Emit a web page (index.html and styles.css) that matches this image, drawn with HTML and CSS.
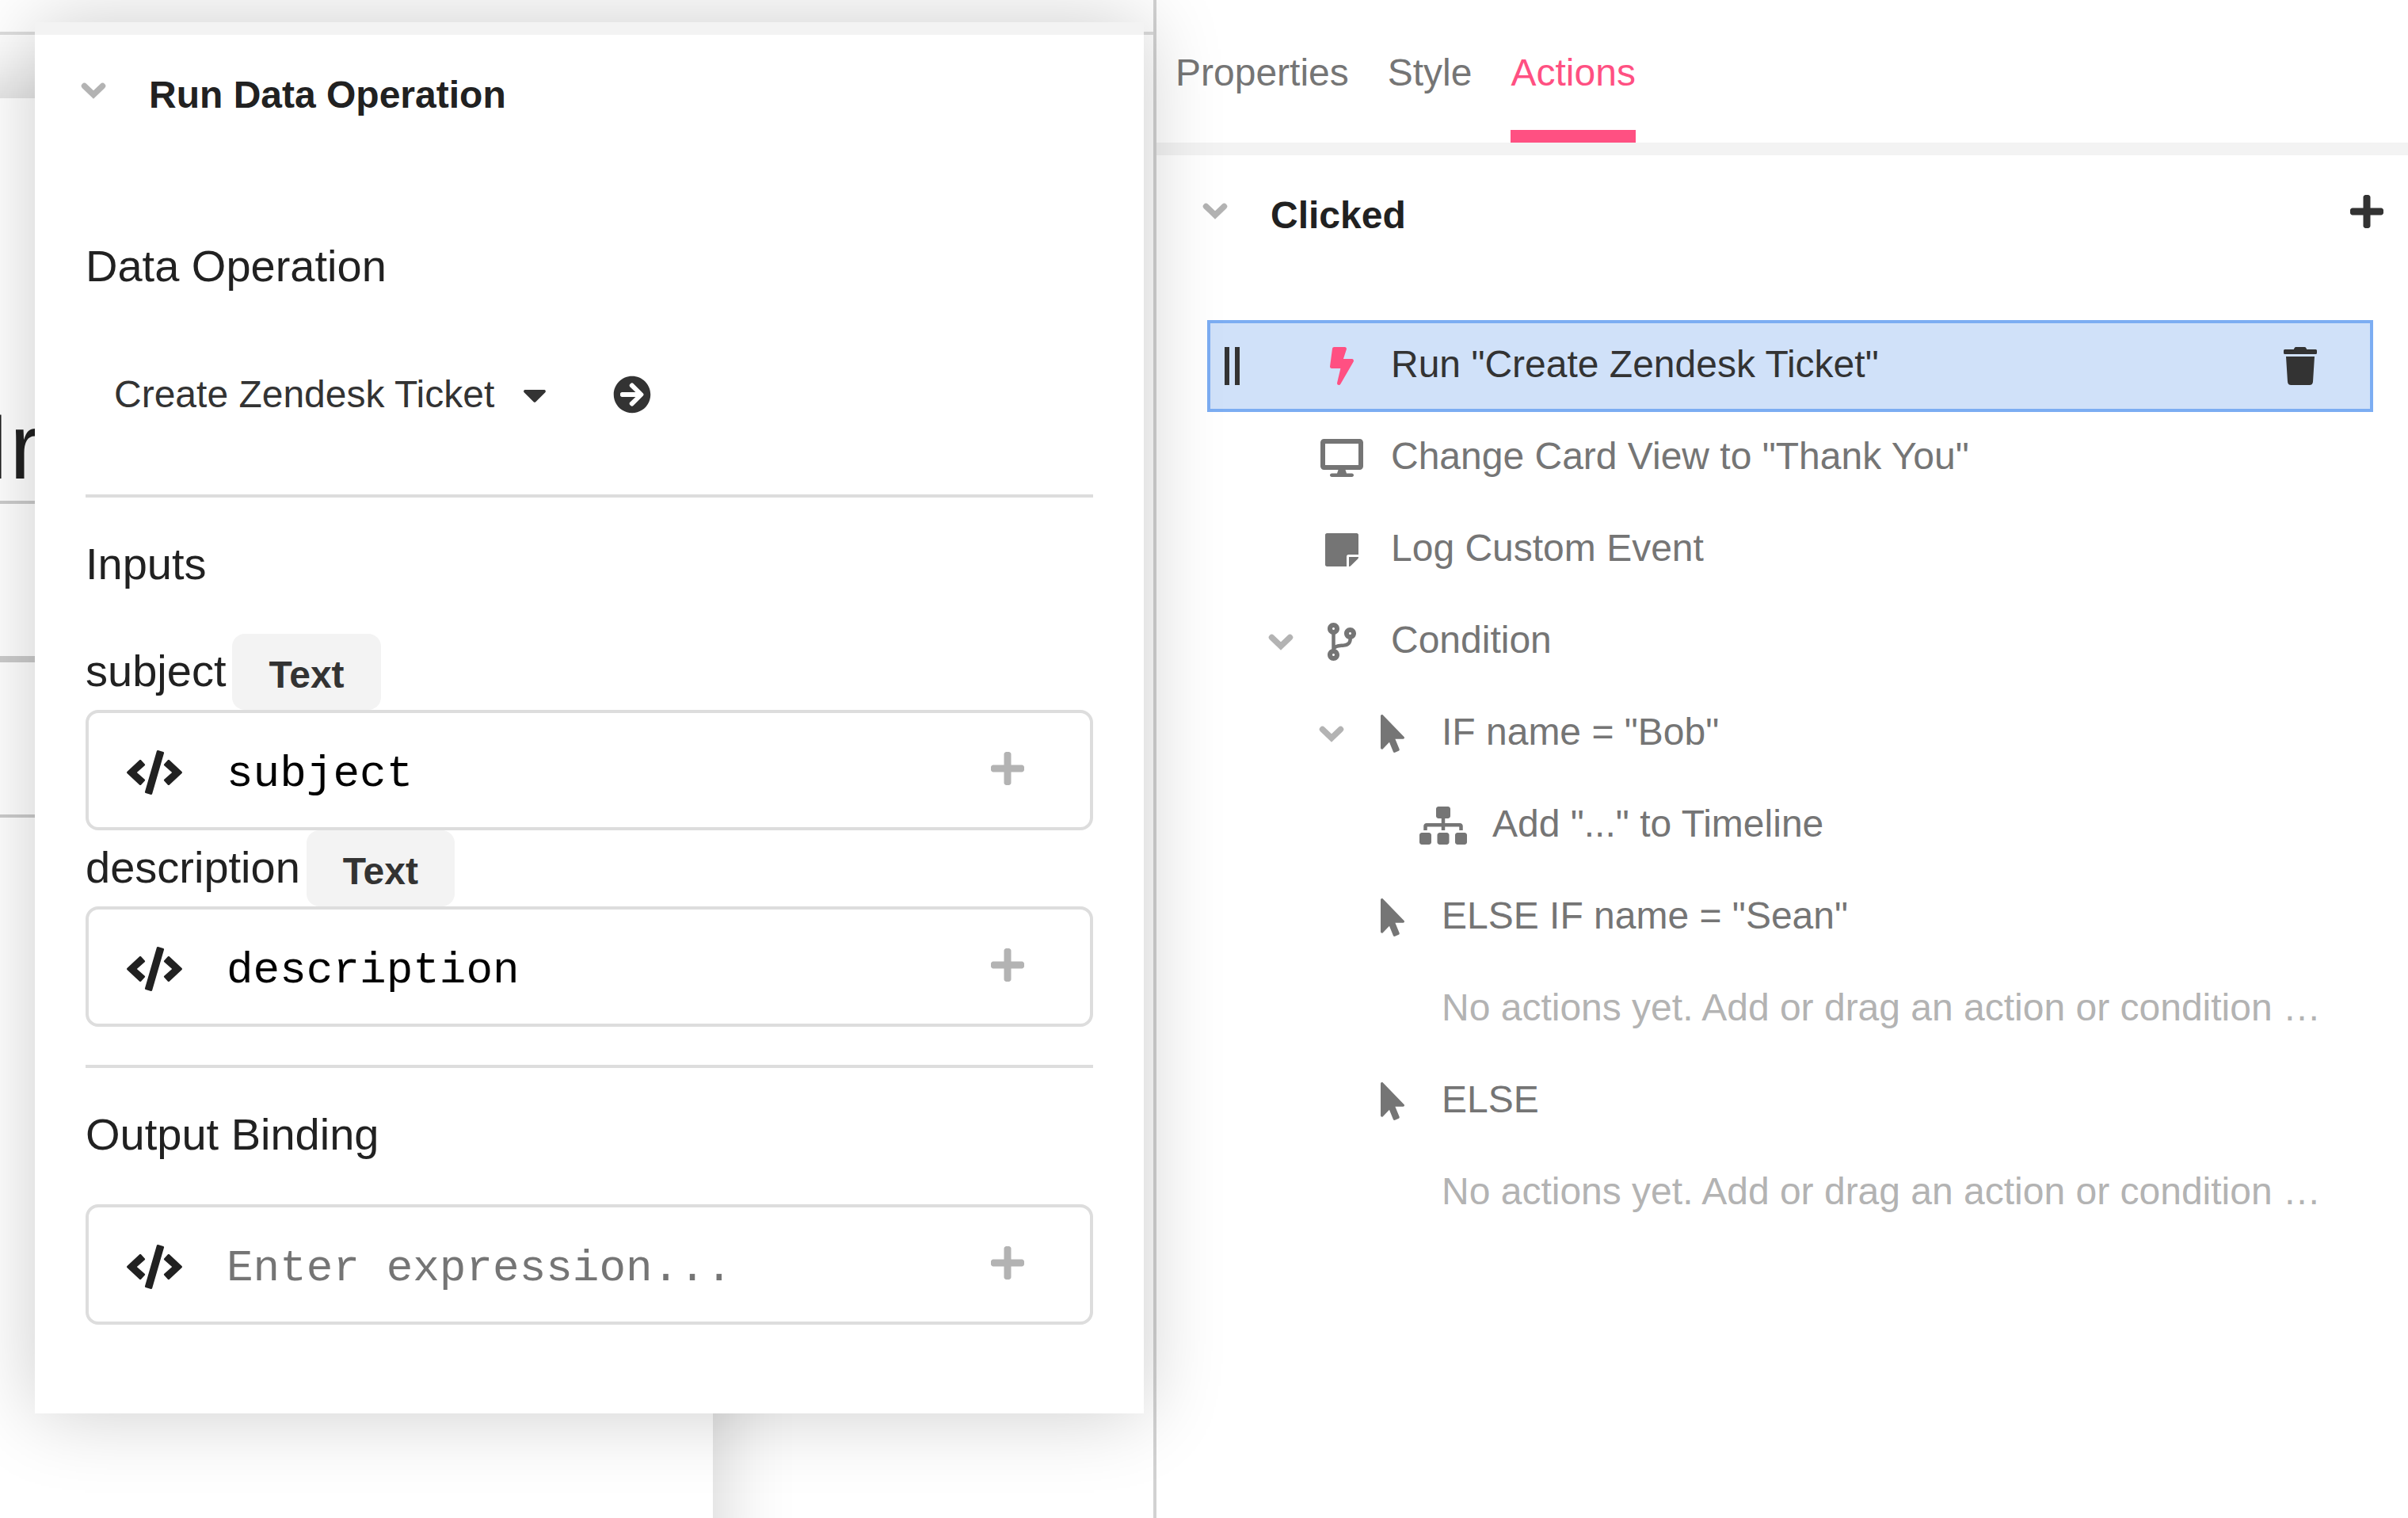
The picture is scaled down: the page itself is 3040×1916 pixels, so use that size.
FILE: index.html
```html
<!DOCTYPE html>
<html lang="en">
<head>
<meta charset="utf-8">
<meta name="viewport" content="width=device-width, initial-scale=1">
<title>Run Data Operation</title>
<link rel="stylesheet" href="styles.css">
</head>
<body>
<svg class="sprite" aria-hidden="true">
  <symbol id="chevron" viewBox="0 0 32 36"><path d="M4.500 11.500L16 22.500 27.500 11.500" fill="none" stroke="currentColor" stroke-width="7.500" stroke-linecap="round"/></symbol>
  <symbol id="caret" viewBox="0 0 320 512"><path d="M31.3 192h257.3c17.8 0 26.7 21.5 14.1 34.1L174.1 354.8c-7.8 7.8-20.5 7.8-28.3 0L17.2 226.1C4.6 213.5 13.5 192 31.3 192z"/></symbol>
  <symbol id="go" viewBox="0 0 512 512"><path d="M256 8c137 0 248 111 248 248S393 504 256 504 8 393 8 256 119 8 256 8zm-28.900 143.600l75.500 72.400H120c-13.300 0-24 10.700-24 24v16c0 13.300 10.700 24 24 24h182.600l-75.500 72.400c-9.700 9.300-9.900 24.800-.4 34.300l11 10.900c9.400 9.400 24.600 9.400 33.900 0L404.300 273c9.400-9.400 9.400-24.600 0-33.900L271.600 106.300c-9.400-9.400-24.600-9.400-33.900 0l-11 10.900c-9.500 9.600-9.300 25.100.4 34.400z"/></symbol>
  <symbol id="plus" viewBox="0 0 448 512"><path d="M416 208H272V64c0-17.670-14.330-32-32-32h-32c-17.670 0-32 14.330-32 32v144H32c-17.670 0-32 14.330-32 32v32c0 17.670 14.330 32 32 32h144v144c0 17.670 14.330 32 32 32h32c17.670 0 32-14.330 32-32V304h144c17.670 0 32-14.330 32-32v-32c0-17.670-14.330-32-32-32z"/></symbol>
  <symbol id="code" viewBox="0 0 640 512"><path d="M278.900 511.500l-61-17.700c-6.400-1.800-10-8.500-8.200-14.900L346.200 8.700c1.800-6.400 8.500-10 14.900-8.200l61 17.700c6.400 1.800 10 8.500 8.200 14.900L293.800 503.300c-1.900 6.400-8.500 10.100-14.900 8.200zm-114-112.200l43.500-46.400c4.600-4.900 4.300-12.700-.8-17.200L117 256l90.600-79.700c5.100-4.500 5.500-12.300.8-17.200l-43.500-46.400c-4.500-4.800-12.100-5.100-17-.5L3.800 247.200c-5.100 4.700-5.100 12.800 0 17.500l144.100 135.100c4.900 4.600 12.500 4.400 17-.5zm327.200.6l144.100-135.100c5.100-4.700 5.100-12.800 0-17.500L492.100 112.100c-4.800-4.500-12.400-4.300-17 .5L431.600 159c-4.600 4.900-4.300 12.700.8 17.200L523 256l-90.600 79.700c-5.100 4.500-5.500 12.300-.8 17.200l43.500 46.400c4.500 4.900 12.100 5.100 17 .6z"/></symbol>
  <symbol id="bolt" viewBox="0 0 320 512"><path d="M296 160H180.600l42.600-129.800C227.200 15 215.700 0 200 0H56C44 0 33.800 8.900 32.200 20.800l-32 240C-1.700 275.200 9.500 288 24 288h118.700L96.600 482.500c-3.600 15.200 8 29.500 23.300 29.500 8.400 0 16.400-4.400 20.800-12l176-304c9.300-15.900-2.200-36-20.700-36z"/></symbol>
  <symbol id="trash" viewBox="0 0 448 512"><path d="M432 32H312l-9.400-18.700A24 24 0 0 0 281.100 0H166.800a23.720 23.720 0 0 0-21.400 13.300L136 32H16A16 16 0 0 0 0 48v32a16 16 0 0 0 16 16h416a16 16 0 0 0 16-16V48a16 16 0 0 0-16-16zM53.200 467a48 48 0 0 0 47.900 45h245.800a48 48 0 0 0 47.900-45L416 128H32z"/></symbol>
  <symbol id="desktop" viewBox="0 0 576 512"><path d="M528 0H48C21.500 0 0 21.500 0 48v320c0 26.500 21.500 48 48 48h192l-16 48h-72c-13.300 0-24 10.700-24 24s10.700 24 24 24h272c13.300 0 24-10.700 24-24s-10.700-24-24-24h-72l-16-48h192c26.500 0 48-21.500 48-48V48c0-26.500-21.500-48-48-48zm-16 352H64V64h448v288z"/></symbol>
  <symbol id="note" viewBox="0 0 448 512"><path d="M312 320h136V56c0-13.300-10.700-24-24-24H24C10.700 32 0 42.700 0 56v400c0 13.300 10.700 24 24 24h264V344c0-13.200 10.800-24 24-24zm129 55l-98 98c-4.500 4.500-10.600 7-17 7h-6V352h128v6.100c0 6.300-2.500 12.400-7 16.900z"/></symbol>
  <symbol id="branch" viewBox="0 0 384 512"><path d="M384 144c0-44.200-35.800-80-80-80s-80 35.800-80 80c0 36.400 24.300 67.100 57.500 76.800-.6 16.100-4.200 28.500-11 36.900-15.400 19.200-49.300 22.400-85.200 25.700-28.200 2.600-57.400 5.400-81.300 16.900v-144c32.500-10.200 56-40.500 56-76.300 0-44.200-35.800-80-80-80S0 35.800 0 80c0 35.800 23.500 66.100 56 76.300v199.300C23.500 365.900 0 396.200 0 432c0 44.200 35.800 80 80 80s80-35.800 80-80c0-34-21.200-63.100-51.200-74.600 3.100-5.200 7.800-9.800 14.900-13.400 16.200-8.200 40.400-10.400 66.100-12.800 42.200-3.900 90-8.400 118.200-43.400 14-17.400 21.100-39.800 21.600-67.900 31.600-10.800 54.400-40.700 54.400-75.900zM80 64c8.800 0 16 7.200 16 16s-7.200 16-16 16-16-7.200-16-16 7.200-16 16-16zm0 384c-8.800 0-16-7.200-16-16s7.200-16 16-16 16 7.200 16 16-7.200 16-16 16zm224-320c8.800 0 16 7.200 16 16s-7.200 16-16 16-16-7.200-16-16 7.200-16 16-16z"/></symbol>
  <symbol id="pointer" viewBox="0 0 320 512"><path d="M302.189 329.126H196.105l55.831 135.993c3.889 9.428-.555 19.999-9.444 23.999l-49.165 21.427c-9.165 4-19.443-.571-23.332-9.714l-53.053-129.136-86.664 89.138C18.729 472.710 0 463.554 0 447.977V18.299C0 1.899 19.921-6.096 30.277 5.443l284.412 292.542c11.472 11.179 3.007 31.141-12.500 31.141z"/></symbol>
  <symbol id="sitemap" viewBox="0 0 640 512"><path d="M128 352H32c-17.670 0-32 14.330-32 32v96c0 17.670 14.330 32 32 32h96c17.670 0 32-14.330 32-32v-96c0-17.670-14.330-32-32-32zm-24-80h192v48h48v-48h192v48h48v-57.590c0-21.170-17.230-38.410-38.410-38.410H344v-64h40c17.670 0 32-14.330 32-32V32c0-17.670-14.330-32-32-32H256c-17.670 0-32 14.330-32 32v96c0 17.670 14.330 32 32 32h40v64H94.410C73.230 224 56 241.230 56 262.410V320h48v-48zm264 80h-96c-17.670 0-32 14.330-32 32v96c0 17.670 14.330 32 32 32h96c17.670 0 32-14.330 32-32v-96c0-17.670-14.330-32-32-32zm240 0h-96c-17.670 0-32 14.330-32 32v96c0 17.670 14.330 32 32 32h96c17.670 0 32-14.330 32-32v-96c0-17.670-14.330-32-32-32z"/></symbol>
</svg>

<div class="app">
  <main class="workspace">
    <div class="toolbar"></div>
    <div class="canvas">
      <div class="card">
        <h1 class="card-title">Ir</h1>
        <div class="card-field"></div>
        <div class="card-field"></div>
      </div>
    </div>

    <section class="sheet">
      <header class="group-header">
        <button class="icon-button" type="button" aria-label="Collapse"><svg class="chevron"><use href="#chevron"/></svg></button>
        <h2 class="group-title">Run Data Operation</h2>
      </header>
      <form class="sheet-body">
        <label class="section-title" for="operation">Data Operation</label>
        <div class="operation">
          <select class="operation-select" id="operation"><option>Create Zendesk Ticket</option></select>
          <svg class="caret" aria-hidden="true"><use href="#caret"/></svg>
          <button class="icon-button open-operation" type="button" aria-label="Open operation"><svg class="go"><use href="#go"/></svg></button>
        </div>

        <hr class="rule">
        <h3 class="section-title">Inputs</h3>
        <div class="field-head"><label class="field-label" for="subject">subject</label><span class="tag">Text</span></div>
        <div class="field">
          <svg class="code" aria-hidden="true"><use href="#code"/></svg>
          <input class="field-input" id="subject" type="text" value="subject" spellcheck="false">
          <button class="icon-button insert" type="button" aria-label="Insert value"><svg class="plus"><use href="#plus"/></svg></button>
        </div>
        <div class="field-head"><label class="field-label" for="description">description</label><span class="tag">Text</span></div>
        <div class="field">
          <svg class="code" aria-hidden="true"><use href="#code"/></svg>
          <input class="field-input" id="description" type="text" value="description" spellcheck="false">
          <button class="icon-button insert" type="button" aria-label="Insert value"><svg class="plus"><use href="#plus"/></svg></button>
        </div>

        <hr class="rule rule-after-field">
        <label class="section-title" for="output">Output Binding</label>
        <div class="field">
          <svg class="code" aria-hidden="true"><use href="#code"/></svg>
          <input class="field-input" id="output" type="text" placeholder="Enter expression..." spellcheck="false">
          <button class="icon-button insert" type="button" aria-label="Insert value"><svg class="plus"><use href="#plus"/></svg></button>
        </div>
      </form>
    </section>
  </main>

  <aside class="inspector">
    <nav class="tabs">
      <a class="tab" href="#properties">Properties</a>
      <a class="tab" href="#style">Style</a>
      <a class="tab tab-active" href="#actions" aria-current="page">Actions</a>
    </nav>
    <header class="group-header">
      <button class="icon-button" type="button" aria-label="Collapse"><svg class="chevron"><use href="#chevron"/></svg></button>
      <h2 class="group-title">Clicked</h2>
      <button class="icon-button" type="button" aria-label="Add action"><svg class="plus"><use href="#plus"/></svg></button>
    </header>

    <ul class="actions">
      <li>
        <div class="action action-selected">
          <span class="grip"></span>
          <svg class="action-icon"><use href="#bolt"/></svg>
          <span class="action-label">Run "Create Zendesk Ticket"</span>
          <button class="icon-button delete" type="button" aria-label="Delete action"><svg class="trash"><use href="#trash"/></svg></button>
        </div>
      </li>
      <li>
        <div class="action">
          <svg class="action-icon"><use href="#desktop"/></svg>
          <span class="action-label">Change Card View to "Thank You"</span>
        </div>
      </li>
      <li>
        <div class="action">
          <svg class="action-icon"><use href="#note"/></svg>
          <span class="action-label">Log Custom Event</span>
        </div>
      </li>
      <li>
        <div class="action">
          <button class="icon-button toggle" type="button" aria-label="Collapse"><svg class="chevron"><use href="#chevron"/></svg></button>
          <svg class="action-icon"><use href="#branch"/></svg>
          <span class="action-label">Condition</span>
        </div>
        <ul class="branch">
          <li>
            <div class="action">
              <button class="icon-button toggle" type="button" aria-label="Collapse"><svg class="chevron"><use href="#chevron"/></svg></button>
              <svg class="action-icon"><use href="#pointer"/></svg>
              <span class="action-label">IF name = "Bob"</span>
            </div>
            <ul class="branch">
              <li>
                <div class="action">
                  <svg class="action-icon"><use href="#sitemap"/></svg>
                  <span class="action-label">Add "..." to Timeline</span>
                </div>
              </li>
            </ul>
          </li>
          <li>
            <div class="action">
              <svg class="action-icon"><use href="#pointer"/></svg>
              <span class="action-label">ELSE IF name = "Sean"</span>
            </div>
            <div class="action">
              <span class="action-label action-empty">No actions yet. Add or drag an action or condition …</span>
            </div>
          </li>
          <li>
            <div class="action">
              <svg class="action-icon"><use href="#pointer"/></svg>
              <span class="action-label">ELSE</span>
            </div>
            <div class="action">
              <span class="action-label action-empty">No actions yet. Add or drag an action or condition …</span>
            </div>
          </li>
        </ul>
      </li>
    </ul>
  </aside>
</div>
</body>
</html>
```

FILE: styles.css
```css
:root {
  --ink: #212121;
  --ink-soft: #333;
  --muted: #757575;
  --faint: #b3b3b3;
  --line: #ddd;
  --band: #f3f3f3;
  --accent: #ff5082;
  --lift: 0 0 96px rgba(0, 0, 0, 0.2);
}

* {
  box-sizing: border-box;
}

body {
  margin: 0;
  background: #fff;
  color: var(--ink);
  font-family: "Helvetica Neue", "Liberation Sans", Arial, sans-serif;
  font-size: 48px;
  line-height: 56px;
}

h1,
h2,
h3,
ul {
  margin: 0;
  padding: 0;
}

ul {
  list-style: none;
}

svg {
  display: block;
  fill: currentColor;
}

.sprite {
  display: none;
}

.icon-button {
  display: flex;
  justify-content: center;
  padding: 0;
  border: 0;
  background: none;
  color: var(--ink-soft);
}

.chevron {
  flex: none;
  width: 32px;
  height: 36px;
  color: var(--faint);
}

.plus,
.trash {
  width: 42px;
  height: 48px;
}

.app {
  display: grid;
  grid-template-columns: 73fr 79fr;
  min-height: 100vh;
}

/* Workspace: the card being edited, scrolled partly out of view */

.workspace {
  position: relative;
  z-index: 1;
  display: flex;
  flex-direction: column;
  min-width: 0;
  border-right: 4px solid #d2d2d2;
}

.toolbar {
  height: 44px;
  border-bottom: 4px solid var(--line);
}

.canvas {
  display: flex;
  flex: 1;
  padding-top: 80px;
  overflow: hidden;
}

.card {
  flex: 1;
  margin: 0 556px -100px -100px;
  padding: 376px 100px 0;
  background: #fff;
  box-shadow: var(--lift);
}

.card-title {
  margin: 0 0 4px -20px;
  font-size: 116px;
  font-weight: 400;
  line-height: 128px;
}

.card-field {
  height: 200px;
  margin-left: -40px;
  border: 4px solid #ccc;
}

/* Sheet that floats over the workspace */

.sheet {
  position: absolute;
  top: 28px;
  right: 12px;
  left: 44px;
  border-top: 16px solid var(--band);
  background: #fff;
  box-shadow: var(--lift);
}

.group-header {
  display: flex;
  align-items: center;
  gap: 54px;
  height: 152px;
  padding: 0 31px 0 58px;
}

.group-header .icon-button {
  padding-bottom: 10px;
}

.group-title {
  flex: 1;
  font-size: 48px;
  font-weight: 700;
}

.sheet-body {
  padding: 108px 64px 112px;
}

.section-title {
  display: block;
  margin-bottom: 56px;
  font-size: 56px;
  font-weight: 400;
  line-height: 64px;
}

.operation {
  display: flex;
  align-items: center;
  height: 96px;
  margin: 82px 0 78px;
  padding-left: 36px;
  color: var(--ink-soft);
}

.operation-select {
  margin-right: 34px;
  padding: 0;
  border: 0;
  appearance: none;
  background: none;
  color: inherit;
  font: inherit;
}

.caret {
  width: 30px;
  height: 48px;
  pointer-events: none;
}

.open-operation {
  margin-left: 84px;
}

.go {
  width: 48px;
  height: 48px;
}

.rule {
  margin: 0 0 52px;
  border: 0;
  border-top: 4px solid var(--line);
}

.rule-after-field {
  margin-top: 48px;
}

.field-head {
  display: flex;
  align-items: center;
  gap: 8px;
  height: 96px;
}

.field-label {
  padding-bottom: 2px;
  font-size: 56px;
  line-height: 64px;
}

.tag {
  height: 96px;
  padding: 24px 46px 0;
  border-radius: 16px;
  background: var(--band);
  color: var(--ink-soft);
  font-weight: 700;
}

.field {
  display: flex;
  align-items: center;
  gap: 56px;
  height: 152px;
  padding: 6px 83px 0 48px;
  border: 4px solid var(--line);
  border-radius: 16px;
}

.code {
  width: 70px;
  height: 56px;
}

.field-input {
  flex: 1;
  min-width: 0;
  padding: 4px 0 0;
  border: 0;
  background: none;
  color: #000;
  font-family: Courier, "Liberation Mono", monospace;
  font-size: 56px;
  line-height: 64px;
}

.field-input::placeholder {
  color: var(--muted);
  opacity: 1;
}

.insert {
  padding-bottom: 10px;
  color: var(--faint);
}

/* Inspector */

.inspector {
  min-width: 0;
}

.tabs {
  display: flex;
  gap: 49px;
  padding-left: 24px;
  border-bottom: 16px solid var(--band);
}

.tab {
  padding: 64px 0 44px;
  border-bottom: 16px solid transparent;
  color: var(--muted);
  text-decoration: none;
}

.tab-active {
  border-color: var(--accent);
  color: var(--accent);
}

.actions {
  padding: 56px 44px 0 64px;
}

.branch {
  padding-left: 64px;
}

.action {
  display: grid;
  grid-template-columns: 24px 30px 60px 1fr auto;
  column-gap: 32px;
  align-items: center;
  height: 116px;
  padding-left: 18px;
  border: 4px solid transparent;
  color: var(--muted);
}

.action-selected {
  padding-right: 67px;
  border-color: #7cadf2;
  background: #d0e1f9;
  color: var(--ink-soft);
}

.action > * {
  grid-row: 1;
}

.grip {
  grid-column: 1;
  width: 19px;
  height: 48px;
  border: solid currentColor;
  border-width: 0 6px;
}

.toggle {
  grid-column: 2;
  padding-top: 2px;
}

.action-icon {
  grid-column: 3;
  width: 60px;
  height: 48px;
}

.action-selected .action-icon {
  color: var(--accent);
}

.action-label {
  grid-column: 4;
  padding-bottom: 4px;
  white-space: nowrap;
}

.action-empty {
  grid-column-end: 6;
  color: var(--faint);
}

.delete {
  grid-column: 5;
}
```
